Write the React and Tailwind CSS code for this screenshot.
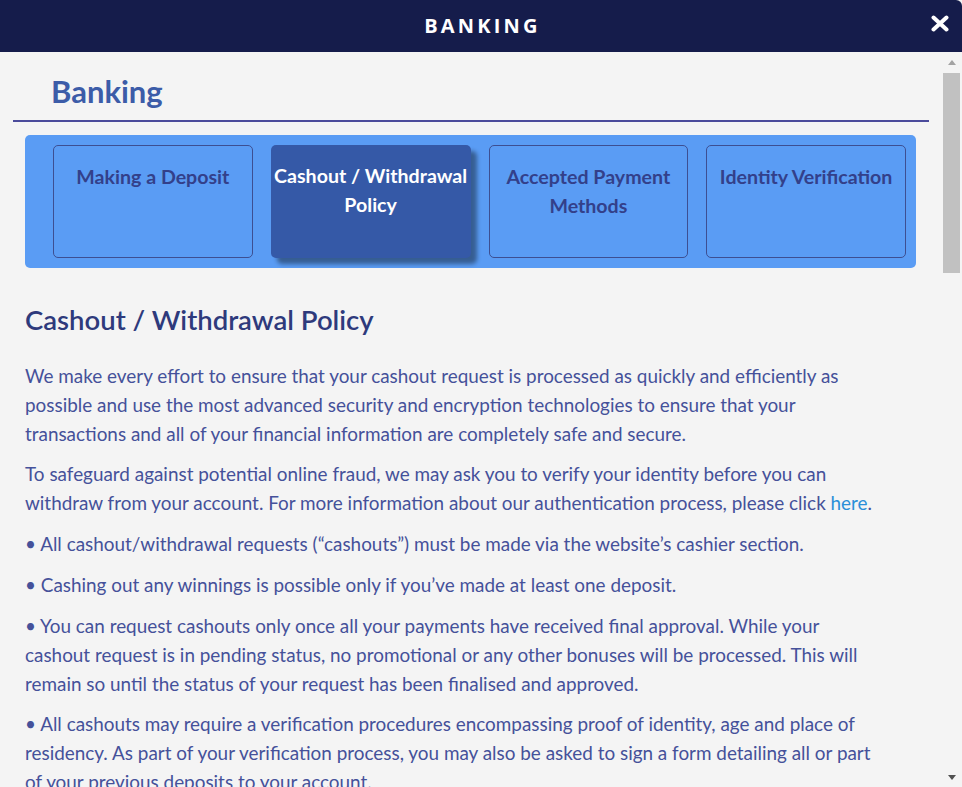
import React from "react";

const tabs = [
  { label: ["Making a Deposit"], active: false },
  { label: ["Cashout / Withdrawal", "Policy"], active: true },
  { label: ["Accepted Payment", "Methods"], active: false },
  { label: ["Identity Verification"], active: false },
];

function Para({ lines, className = "" }) {
  return (
    <p className={"mb-[11px] whitespace-nowrap " + className}>
      {lines.map((l, i) => (
        <React.Fragment key={i}>
          {l}
          {i < lines.length - 1 && <br />}
        </React.Fragment>
      ))}
    </p>
  );
}

export default function App() {
  return (
    <div
      className="w-[962px] h-[787px] flex flex-col overflow-hidden bg-[#f4f4f4]"
      style={{ fontFamily: "Lato, 'Open Sans', sans-serif" }}
    >
      <header className="relative h-[52px] shrink-0 bg-[#151c4b] rounded-tr-[6px] flex items-center justify-center">
        <span
          className="text-white font-bold text-[20px] tracking-[0.16em] pl-[3px]"
          style={{ fontFamily: "'Open Sans', sans-serif" }}
        >
          BANKING
        </span>
        <svg
          className="absolute right-[13px] top-[15px]"
          width="18"
          height="17"
          viewBox="0 0 18 17"
        >
          <path d="M2.5 2.5 L15.5 14.5 M15.5 2.5 L2.5 14.5" stroke="#ffffff" strokeWidth="4" strokeLinecap="round" />
        </svg>
      </header>

      <div className="flex-1 flex min-h-0">
        <main className="flex-1 min-w-0 overflow-hidden px-[13px]">
          <h2 className="pl-[38px] pt-[21px] text-[31px] leading-[36px] font-bold text-[#3c5ca8]">
            Banking
          </h2>
          <div className="mt-[11px] h-[2px] bg-[#4b4b9b]" />

          <div className="ml-[12px] mr-[13px] mt-[13px] rounded-[5px] bg-[#5a9cf4] pl-[28px] pr-[10px] py-[10px] flex gap-[18px]">
            {tabs.map((t, i) => (
              <div
                key={i}
                className={
                  "w-[200px] h-[113px] rounded-[5px] pt-[16px] text-center font-bold text-[19.6px] leading-[29px] whitespace-nowrap " +
                  (t.active
                    ? "bg-[#3559a7] text-white shadow-[6px_6px_4px_rgba(0,0,0,0.4)]"
                    : "border border-[#3d4f92] text-[#33408a]")
                }
              >
                {t.label.map((l, j) => (
                  <div key={j}>{l}</div>
                ))}
              </div>
            ))}
          </div>

          <div className="pl-[12px] text-[18.9px] leading-[29px] text-[#45519a]">
            <h3 className="mt-[34px] text-[27.5px] leading-[36px] font-semibold text-[#2e3a7c]">
              Cashout / Withdrawal Policy
            </h3>
            <div className="mt-[23px]">
              <Para
                lines={[
                  "We make every effort to ensure that your cashout request is processed as quickly and efficiently as",
                  "possible and use the most advanced security and encryption technologies to ensure that your",
                  "transactions and all of your financial information are completely safe and secure.",
                ]}
              />
              <p className="mb-[12px] whitespace-nowrap">
                To safeguard against potential online fraud, we may ask you to verify your identity before you can
                <br />
                withdraw from your account. For more information about our authentication process, please click{" "}
                <span className="text-[#2a8fd8]">here</span>.
              </p>
              <Para className="mb-[12px]" lines={["• All cashout/withdrawal requests (“cashouts”) must be made via the website’s cashier section."]} />
              <Para className="mb-[12px]" lines={["• Cashing out any winnings is possible only if you’ve made at least one deposit."]} />
              <Para
                lines={[
                  "• You can request cashouts only once all your payments have received final approval. While your",
                  "cashout request is in pending status, no promotional or any other bonuses will be processed. This will",
                  "remain so until the status of your request has been finalised and approved.",
                ]}
              />
              <Para
                lines={[
                  "• All cashouts may require a verification procedures encompassing proof of identity, age and place of",
                  "residency. As part of your verification process, you may also be asked to sign a form detailing all or part",
                  "of your previous deposits to your account.",
                ]}
              />
            </div>
          </div>
        </main>

        <aside className="w-[20px] shrink-0 flex flex-col items-start pl-[1px]">
          <div className="h-[21px] w-[17px] flex items-center justify-center">
            <div className="w-0 h-0 border-l-[4px] border-r-[4px] border-b-[5px] border-l-transparent border-r-transparent border-b-[#a3a3a3]" />
          </div>
          <div className="w-[17px] h-[200px] bg-[#c1c1c1]" />
          <div className="flex-1" />
          <div className="h-[14px] w-[17px] flex items-start justify-center pt-[2px]">
            <div className="w-0 h-0 border-l-[4px] border-r-[4px] border-t-[5px] border-l-transparent border-r-transparent border-t-[#505050]" />
          </div>
        </aside>
      </div>
    </div>
  );
}
